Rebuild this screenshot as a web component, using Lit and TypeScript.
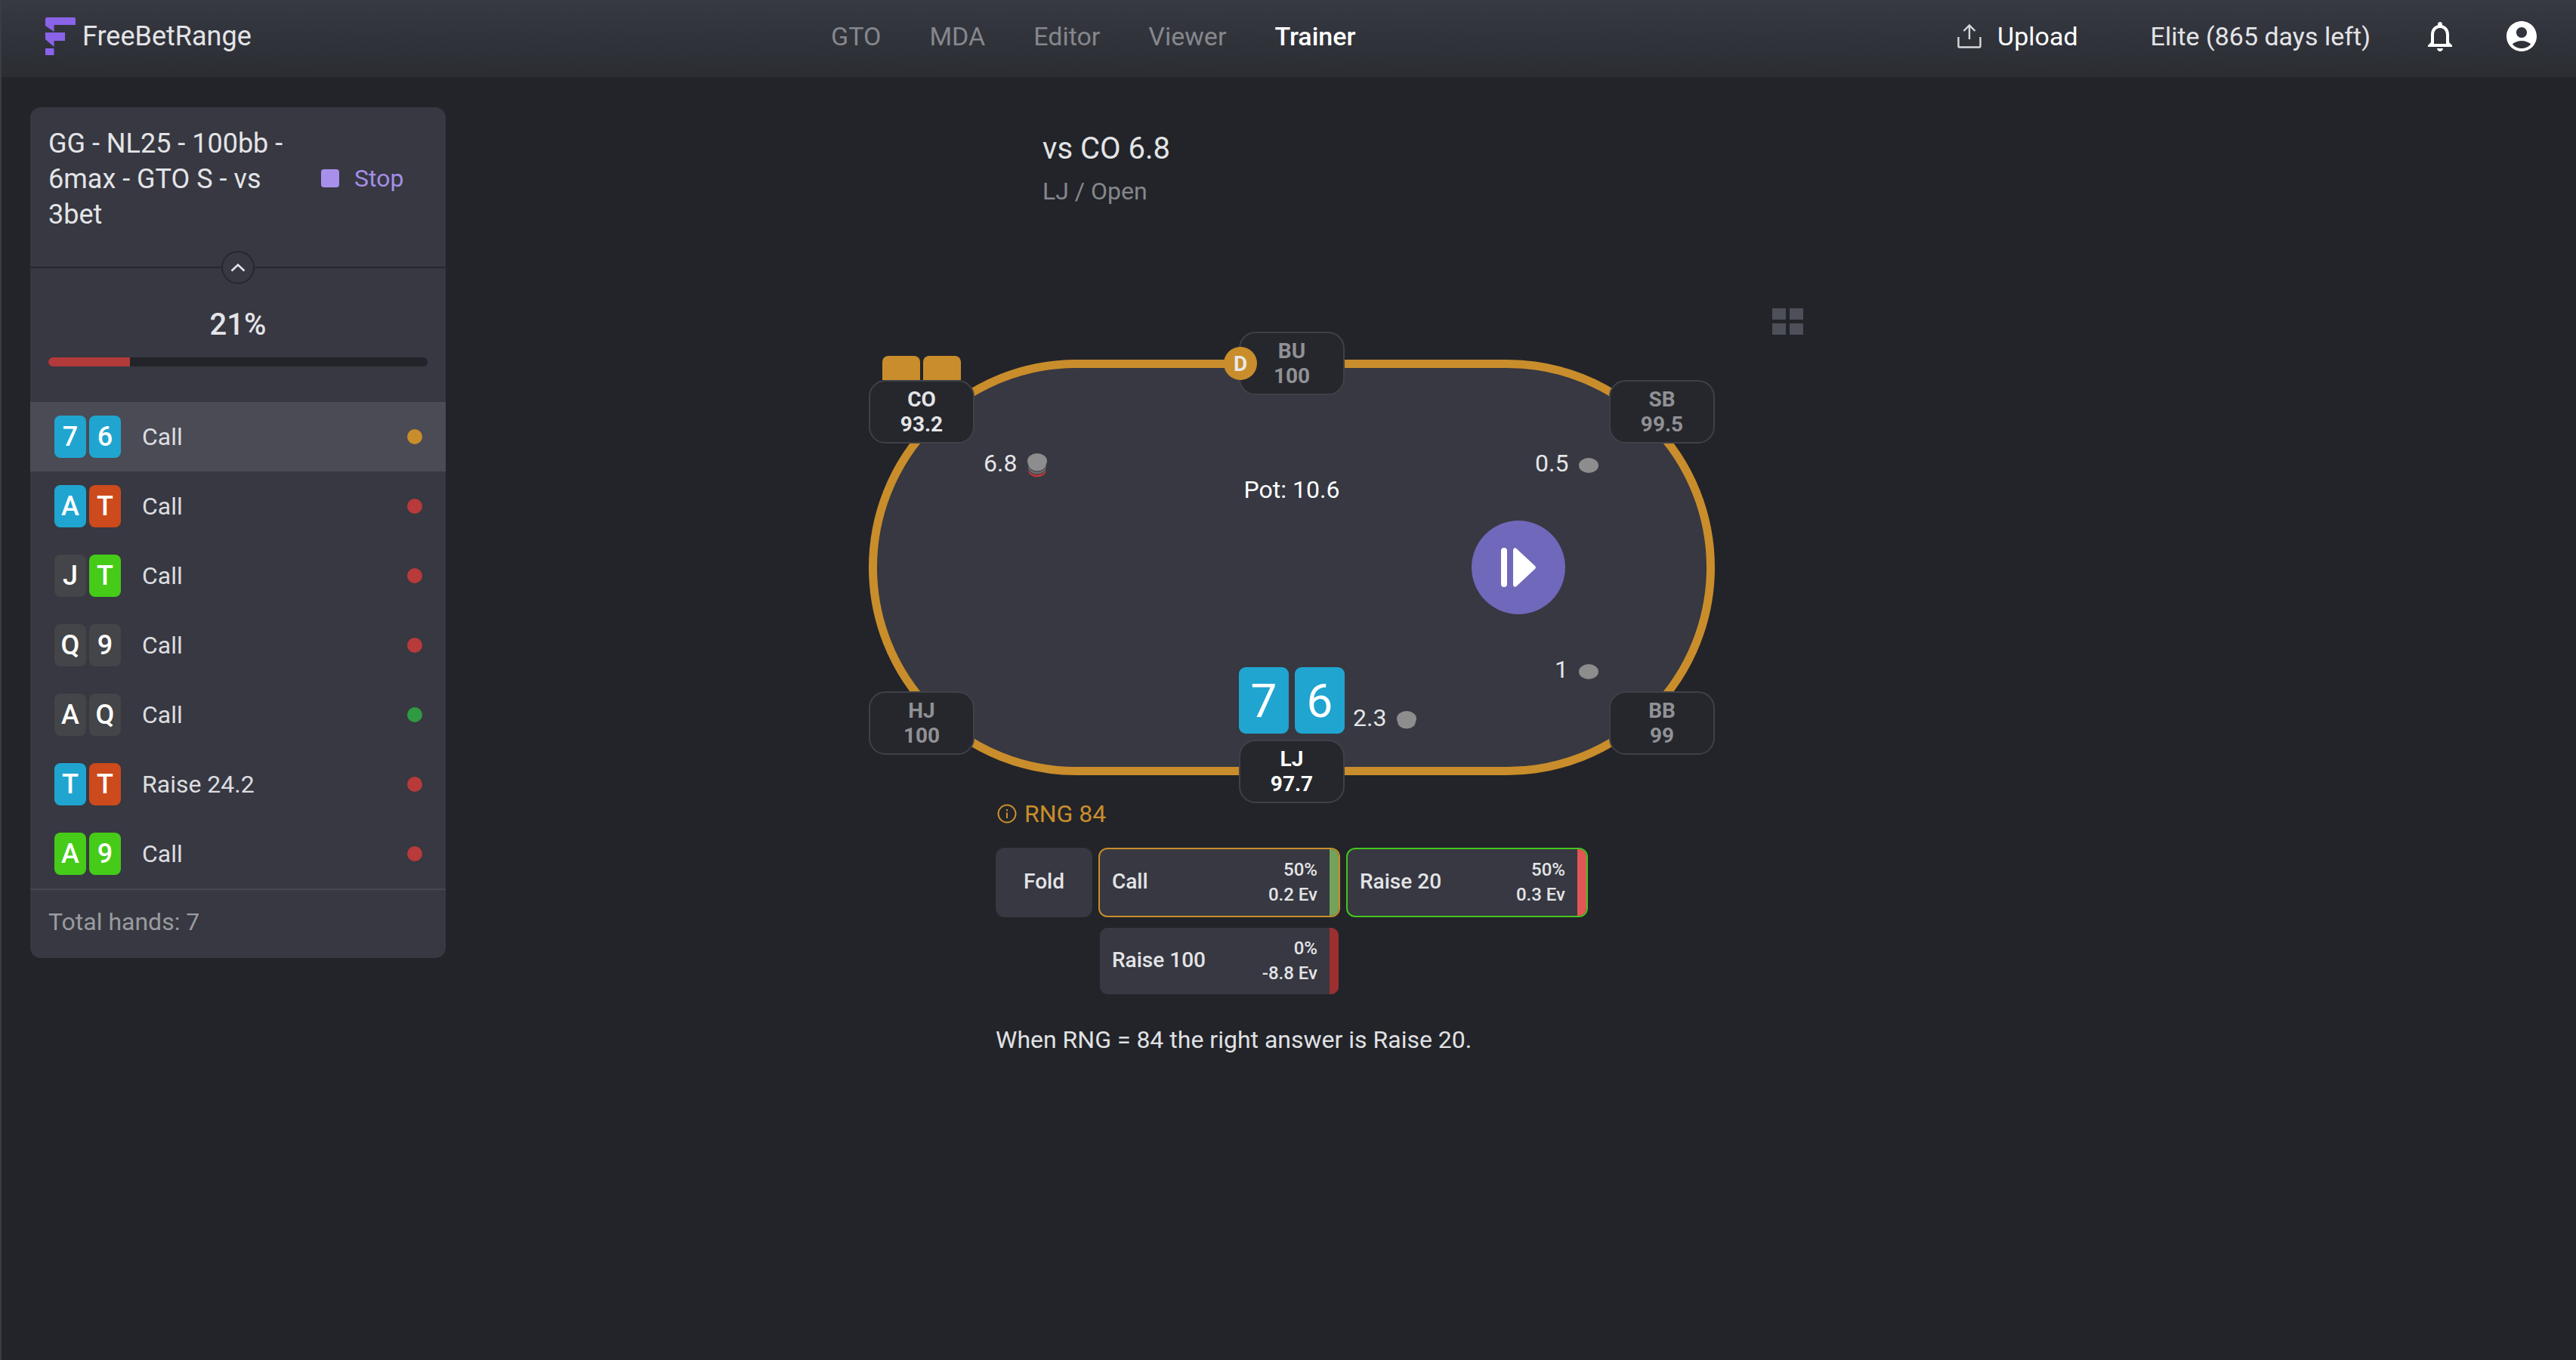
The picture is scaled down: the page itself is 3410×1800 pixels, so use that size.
import { LitElement, html, css, svg } from "lit";
import { customElement } from "lit/decorators.js";

type Suit = "b" | "r" | "g" | "d";
const hands: { c: [string, Suit][]; label: string; dot: string }[] = [
  { c: [["7", "b"], ["6", "b"]], label: "Call", dot: "o" },
  { c: [["A", "b"], ["T", "r"]], label: "Call", dot: "x" },
  { c: [["J", "d"], ["T", "g"]], label: "Call", dot: "x" },
  { c: [["Q", "d"], ["9", "d"]], label: "Call", dot: "x" },
  { c: [["A", "d"], ["Q", "d"]], label: "Call", dot: "k" },
  { c: [["T", "b"], ["T", "r"]], label: "Raise 24.2", dot: "x" },
  { c: [["A", "g"], ["9", "g"]], label: "Call", dot: "x" },
];

const seats = [
  { n: "CO", v: "93.2", cls: "co on" },
  { n: "BU", v: "100", cls: "bu" },
  { n: "SB", v: "99.5", cls: "sb" },
  { n: "BB", v: "99", cls: "bb" },
  { n: "HJ", v: "100", cls: "hj" },
  { n: "LJ", v: "97.7", cls: "lj hero" },
];

@customElement("app-root")
export class AppRoot extends LitElement {
  static styles = css`
    :host { display: block; width: 3410px; height: 1800px; background: #222429; color: #e3e4e7;
      font-family: Roboto, "Liberation Sans", sans-serif; overflow: hidden; box-sizing: border-box; border-left: 2px solid #3b3d44; }
    * { box-sizing: border-box; }
    header { height: 102px; padding-bottom: 6px; margin-left: -2px; background: linear-gradient(180deg, #373943 0%, #2b2d33 100%); position: relative;
      display: grid; grid-template-columns: 1100px 1fr auto; align-items: center; font-size: 34px; }
    .brand { display: flex; align-items: center; padding-left: 60px; gap: 9px; font-size: 36px; color: #e3e4e7; }
    .brand svg { display: block; }
    nav { display: flex; gap: 64px; color: #85878c; }
    nav .cur { color: #fff; font-weight: 500; }
    .tools { display: flex; align-items: center; padding-right: 52px; }
    .upload { display: flex; align-items: center; gap: 21px; color: #fff; font-weight: 400; margin-right: 96px; }
    .elite { color: #e3e4e7; margin-right: 76px; }
    .bell { margin-right: 72px; display: block; }
    .acct { display: block; }
    main { display: flex; align-items: flex-start; }
    .side { width: 550px; margin: 40px 0 0 38px; background: #373841; border-radius: 14px; flex: none; }
    .head { height: 213px; border-bottom: 2px solid #26282c; padding: 25px 24px 0; display: flex; position: relative; }
    .head .t { width: 330px; font-size: 36px; line-height: 47px; color: #e3e4e7; }
    .stop { display: flex; align-items: center; gap: 20px; height: 47px; margin: 45px 0 0 31px; color: #a48ee6; font-size: 32px; }
    .stop i { width: 24px; height: 24px; background: #a88fec; border-radius: 4px; }
    .chev { position: absolute; left: 253px; top: 190px; width: 44px; height: 44px; border-radius: 50%; background: #373841;
      border: 2px solid #26282c; display: flex; align-items: center; justify-content: center; }
    .prog { height: 177px; padding: 0 24px; display: flex; flex-direction: column; align-items: center; }
    .pct { font-size: 40px; font-weight: 500; line-height: 46px; margin-top: 52px; }
    .track { width: 100%; height: 12px; border-radius: 6px; background: #222429; margin-top: 20px; overflow: hidden; }
    .track div { height: 100%; background: #b33a3a; }
    .row { height: 92px; display: flex; align-items: center; padding: 0 32px; font-size: 32px; color: #dcdde0; }
    .row.cur { background: #4a4b55; }
    .cards { display: flex; gap: 4px; width: 116px; }
    .card { width: 42px; height: 56px; border-radius: 8px; color: #fff; display: flex; align-items: center; justify-content: center; font-size: 36px; font-weight: 500; }
    .card.b { background: #1fa5d0; } .card.r { background: #cc4a1b; } .card.g { background: #45cb18; } .card.d { background: #444548; }
    .lbl { flex: 1; }
    .dot { width: 20px; height: 20px; border-radius: 50%; margin-right: -1px; }
    .dot.o { background: #c98d2b; } .dot.x { background: #b83a3a; } .dot.k { background: #2f9a41; }
    .total { border-top: 2px solid #45464e; height: 92px; padding: 0 24px 6px; display: flex; align-items: center; font-size: 32px; color: #9a9ba0; }
    .center { margin-left: 560px; width: 1300px; }
    .title { padding: 73px 0 0 230px; height: 337px; }
    .title .a { font-size: 40px; line-height: 44px; color: #e3e4e7; }
    .title .b { font-size: 32px; line-height: 40px; margin-top: 14px; color: #85878c; }
    .stage { position: relative; width: 1120px; height: 618px; }
    .felt { position: absolute; left: 0; top: 37px; width: 1120px; height: 550px; border-radius: 275px; background: #373841; border: 11px solid #c98d2b; }
    .seat { position: absolute; width: 140px; height: 84px; border-radius: 22px; background: #26272c; border: 2px solid #404148; display: flex; flex-direction: column;
      align-items: center; justify-content: center; font-size: 28px; font-weight: 700; line-height: 33px; color: #909196; }
    .seat.on { color: #e3e4e7; } .seat.hero { color: #fff; }
    .co { left: 0; top: 64px; } .bu { left: 490px; top: 0; } .sb { left: 980px; top: 64px; }
    .bb { left: 980px; top: 476px; } .hj { left: 0; top: 476px; } .lj { left: 490px; top: 540px; }
    .backs { position: absolute; left: 18px; top: 32px; display: flex; gap: 4px; }
    .backs i { width: 50px; height: 32px; background: #c98d2b; border-radius: 8px 8px 0 0; }
    .dealer { position: absolute; left: 470px; top: 20px; width: 44px; height: 44px; border-radius: 50%; background: #c98d2b; color: #e8e8ea;
      font-size: 28px; font-weight: 700; display: flex; align-items: center; justify-content: center; }
    .bet { position: absolute; display: flex; align-items: center; font-size: 32px; line-height: 40px; color: #e3e4e7; gap: 14px; }
    .bet svg { display: block; margin-top: 6px; }
    .b1 { left: 152px; top: 154px; } .b2 { left: 882px; top: 154px; } .b3 { left: 908px; top: 427px; } .b4 { left: 641px; top: 491px; }
    .pot { position: absolute; left: 360px; width: 400px; top: 189px; text-align: center; font-size: 32px; line-height: 40px; color: #fff; }
    .play { position: absolute; left: 798px; top: 250px; width: 124px; height: 124px; border-radius: 50%; background: #7068ba; display: flex; align-items: center; justify-content: center; }
    .gridbtn { position: absolute; left: 1196px; top: -31px; display: grid; grid-template-columns: 18px 18px; grid-auto-rows: 15px; gap: 5px; }
    .gridbtn i { background: #4d4f59; }
    .hole { position: absolute; left: 490px; top: 444px; display: flex; gap: 8px; }
    .hole div { width: 66px; height: 88px; border-radius: 9px; background: #1fa5d0; color: #fff; font-size: 62px; display: flex; align-items: center; justify-content: center; }
    .below { margin-left: 168px; }
    .rng { display: flex; align-items: center; gap: 10px; height: 40px; font-size: 32px; color: #c98d2b; margin-left: 2px; }
    .acts { display: grid; grid-template-columns: 128px 320px 320px; gap: 12px 8px; margin-top: 25px; }
    .act { height: 92px; border-radius: 12px; border: 2px solid transparent; background: #373841; background-clip: padding-box; position: relative; overflow: hidden;
      display: flex; align-items: center; font-size: 28px; font-weight: 500; color: #e3e4e7; padding: 0 28px 0 16px; }
    .act.fold { justify-content: center; padding: 0 0 4px; background-clip: border-box; }
    .act.call { border-color: #c98d2b; } .act.rz { border-color: #45c51e; }
    .act .m { flex: 1; margin-top: -4px; }
    .act .r { text-align: right; font-size: 24px; line-height: 33px; }
    .act .bar { position: absolute; right: 0; top: 0; bottom: 0; width: 12px; }
    .s2 { grid-column: 2; }
    .msg { margin-top: 38px; font-size: 32px; line-height: 40px; color: #e0e1e4; }
  `;

  private chip(layers: string[]) {
    const h = 20 + layers.length * 4 + 1;
    return html`<svg width="26" height=${h} viewBox="0 0 26 ${h}">
      ${layers.map((c, i) => svg`<ellipse cx="13" cy=${10 + (layers.length - i) * 4} rx="12.5" ry="10" fill=${c} stroke="#373841" stroke-width="1"/>`)}
      <ellipse cx="13" cy="10" rx="13" ry="10" fill="#8d8d8d"/>
    </svg>`;
  }

  render() {
    return html`
      <header>
        <div class="brand">
          <svg width="40" height="50" viewBox="0 0 40 50" fill="#8a63e8"><path d="M2 0H38a2 2 0 0 1 2 2V10H11.500V19L0 11V2a2 2 0 0 1 2-2Z"/><path d="M0 20H26V31H11.500V39L0 29Z"/><path d="M0 41H11.500V50H0Z"/></svg>
          <span>FreeBetRange</span>
        </div>
        <nav><span>GTO</span><span>MDA</span><span>Editor</span><span>Viewer</span><span class="cur">Trainer</span></nav>
        <div class="tools">
          <div class="upload">
            <svg width="32" height="32" viewBox="0 0 32 32" fill="none" stroke="#d8d9dc" stroke-width="2.4"><path d="M1.500 17V29a1.500 1.500 0 0 0 1.500 1.500H29a1.500 1.500 0 0 0 1.500-1.500V17"/><path d="M16 20V2M8.500 9 16 1.500 23.500 9"/></svg>
            <span>Upload</span>
          </div>
          <span class="elite">Elite (865 days left)</span>
          <svg class="bell" width="32" height="39" viewBox="4 2.500 16 19.500" fill="#fff"><path d="M12 22c1.100 0 2-.9 2-2h-4c0 1.100.9 2 2 2zm6-6v-5c0-3.070-1.640-5.640-4.500-6.320V4c0-.83-.67-1.500-1.500-1.500s-1.500.67-1.500 1.500v.68C7.630 5.360 6 7.920 6 11v5l-2 2v1h16v-1l-2-2zm-2 1H8v-6c0-2.480 1.510-4.500 4-4.500s4 2.020 4 4.500v6z"/></svg>
          <svg class="acct" width="40" height="40" viewBox="2 2 20 20" fill="#fff"><path d="M12 2C6.480 2 2 6.480 2 12s4.480 10 10 10 10-4.480 10-10S17.520 2 12 2zm0 4c1.930 0 3.500 1.570 3.500 3.500S13.930 13 12 13s-3.500-1.570-3.500-3.500S10.070 6 12 6zm0 14c-2.030 0-4.430-.82-6.140-2.880C7.550 15.800 9.680 15 12 15s4.450.8 6.140 2.120C16.430 19.180 14.030 20 12 20z"/></svg>
        </div>
      </header>
      <main>
        <aside class="side">
          <div class="head">
            <div class="t">GG - NL25 - 100bb - 6max - GTO S - vs 3bet</div>
            <div class="stop"><i></i><span>Stop</span></div>
            <div class="chev"><svg width="20" height="12" viewBox="0 0 20 12" fill="none" stroke="#e3e4e7" stroke-width="2.600"><path d="M1.500 10.500 10 2.500l8.500 8"/></svg></div>
          </div>
          <div class="prog"><div class="pct">21%</div><div class="track"><div style="width:21.5%"></div></div></div>
          ${hands.map((h, i) => html`
            <div class="row ${i === 0 ? "cur" : ""}">
              <div class="cards">${h.c.map(([t, s]) => html`<div class="card ${s}">${t}</div>`)}</div>
              <div class="lbl">${h.label}</div>
              <div class="dot ${h.dot}"></div>
            </div>`)}
          <div class="total">Total hands: 7</div>
        </aside>
        <section class="center">
          <div class="title"><div class="a">vs CO 6.8</div><div class="b">LJ / Open</div></div>
          <div class="stage">
            <div class="felt"></div>
            <div class="backs"><i></i><i></i></div>
            ${seats.map((s) => html`<div class="seat ${s.cls}"><span>${s.n}</span><span>${s.v}</span></div>`)}
            <div class="dealer">D</div>
            <div class="pot">Pot: 10.6</div>
            <div class="bet b1"><span>6.8</span>${this.chip(["#b83a3a", "#6b6b6f", "#8d8d8d"])}</div>
            <div class="bet b2"><span>0.5</span>${this.chip([])}</div>
            <div class="bet b3"><span>1</span>${this.chip([])}</div>
            <div class="bet b4"><span>2.3</span>${this.chip(["#8d8d8d"])}</div>
            <div class="play"><svg width="46" height="52" viewBox="0 0 46 52" fill="#fff"><rect x="0" y="0" width="8" height="52" rx="4"/><path d="M16 3.500C16 .6 18.600-1 20.600 1.200L45 24a3 3 0 0 1 0 4L20.600 50.800C18.600 53 16 51.400 16 48.500Z"/></svg></div>
            <div class="gridbtn"><i></i><i></i><i></i><i></i></div>
            <div class="hole"><div>7</div><div>6</div></div>
          </div>
          <div class="below">
            <div class="rng">
              <svg width="26" height="26" viewBox="0 0 26 26" fill="none" stroke="#c98d2b" stroke-width="2"><circle cx="13" cy="13" r="11.500"/><path d="M13 11.500V19M13 7v2.500"/></svg>
              <span>RNG 84</span>
            </div>
            <div class="acts">
              <div class="act fold">Fold</div>
              <div class="act call"><span class="m">Call</span><div class="r">50%<br />0.2 Ev</div><div class="bar" style="background:#73a35b"></div></div>
              <div class="act rz"><span class="m">Raise 20</span><div class="r">50%<br />0.3 Ev</div><div class="bar" style="background:#e35656"></div></div>
              <div class="act s2"><span class="m">Raise 100</span><div class="r">0%<br />-8.8 Ev</div><div class="bar" style="background:#9c2f2f"></div></div>
            </div>
            <div class="msg">When RNG = 84 the right answer is Raise 20.</div>
          </div>
        </section>
      </main>
    `;
  }
}
